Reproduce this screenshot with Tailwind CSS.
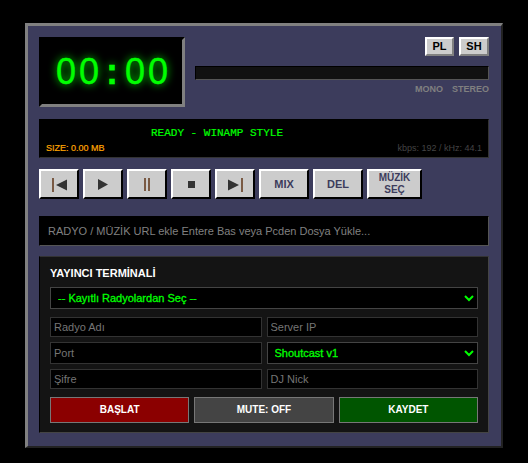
<!DOCTYPE html>
<html lang="en">
<head>
  <meta charset="UTF-8">
  <meta name="viewport" content="width=device-width, initial-scale=1.0">
  <title>Winamp Player</title>
  <script src="https://cdn.jsdelivr.net/npm/@tailwindcss/browser@4"></script>
</head>
<body class="bg-black min-h-screen font-['Liberation_Sans',Arial,sans-serif]">
  <div class="pt-[23px] pl-[25px]">
    <!-- Player -->
    <div class="w-[478px] h-[425px] bg-[#3c3c5c] border-[3px] border-t-[#808080] border-l-[#808080] border-r-[#222222] border-b-[#222222] border-r-2 border-b-2 pt-[11px] pl-[11px] pr-[12px]">
      <!-- Top -->
      <div class="flex h-[70px]">
        <div class="w-[146px] h-[70px] bg-black border-[3px] border-t-black border-l-black border-r-[#808080] border-b-[#808080] flex items-center justify-center text-[#00ff00] text-[36px] leading-none [-webkit-text-stroke:0.4px_#00ff00] [text-shadow:0_0_8px_#00ff00]">
          <span class="w-[23px] text-center">0</span>
          <span class="w-[23px] text-center">0</span>
          <span class="w-[23px] text-center font-bold">:</span>
          <span class="w-[23px] text-center">0</span>
          <span class="w-[23px] text-center">0</span>
        </div>
        <div class="flex-1 ml-[10px] flex flex-col">
          <div class="flex justify-end gap-[5px]">
            <button class="w-[29px] h-[19px] bg-[#cccccc] border-2 border-t-white border-l-white border-r-[#808080] border-b-[#808080] text-[11px] font-bold text-black leading-none">PL</button>
            <button class="w-[30px] h-[19px] bg-[#cccccc] border-2 border-t-white border-l-white border-r-[#808080] border-b-[#808080] text-[11px] font-bold text-black leading-none">SH</button>
          </div>
          <div class="mt-[10px] h-[14px] bg-[#111111] border border-t-black border-l-black border-r-[#555555] border-b-[#555555]"></div>
          <div class="mt-[2px] flex justify-end gap-[9px] text-[9px] font-bold text-[#808080] leading-[14px]">
            <span>MONO</span>
            <span>STEREO</span>
          </div>
        </div>
      </div>

      <!-- Info -->
      <div class="mt-[12px] h-[39px] bg-black border border-t-black border-l-black border-r-[#333333] border-b-[#333333]">
        <div class="pl-[111px] pt-[6px] text-[11px] leading-[14px] text-[#00ff00] [-webkit-text-stroke:0.2px_#00ff00] font-['Liberation_Mono',monospace]">READY - WINAMP STYLE</div>
        <div class="flex justify-between px-[6px] mt-[2px] text-[9px] leading-[12px]">
          <span class="text-[#ffa500] [-webkit-text-stroke:0.2px_#ffa500]">SIZE: 0.00 MB</span>
          <span class="text-[#444444]">kbps: 192 / kHz: 44.1</span>
        </div>
      </div>

      <!-- Transport -->
      <div class="mt-[11px] flex gap-[4px]">
        <button class="w-[40px] h-[30px] bg-[#cccccc] border-2 border-t-white border-l-white border-r-black border-b-black flex items-center justify-center pt-[1px]">
          <svg width="15" height="14" viewBox="0 0 15 14"><rect x="0" y="0" width="2" height="14" fill="#7a5a44"/><path d="M15 1.5V12.5L4 7Z" fill="#333"/></svg>
        </button>
        <button class="w-[40px] h-[30px] bg-[#cccccc] border-2 border-t-white border-l-white border-r-black border-b-black flex items-center justify-center pt-[1px]">
          <svg width="10" height="11" viewBox="0 0 10 11"><path d="M0 0V11L10 5.5Z" fill="#333"/></svg>
        </button>
        <button class="w-[40px] h-[30px] bg-[#cccccc] border-2 border-t-white border-l-white border-r-black border-b-black flex items-center justify-center pt-[1px]">
          <svg width="6" height="13" viewBox="0 0 6 13"><rect x="0" y="0" width="2" height="13" fill="#7a5a44"/><rect x="4" y="0" width="2" height="13" fill="#7a5a44"/></svg>
        </button>
        <button class="w-[40px] h-[30px] bg-[#cccccc] border-2 border-t-white border-l-white border-r-black border-b-black flex items-center justify-center pt-[1px]">
          <svg width="7" height="7" viewBox="0 0 7 7"><rect width="7" height="7" fill="#333"/></svg>
        </button>
        <button class="w-[40px] h-[30px] bg-[#cccccc] border-2 border-t-white border-l-white border-r-black border-b-black flex items-center justify-center pt-[1px]">
          <svg width="15" height="14" viewBox="0 0 15 14"><path d="M0 1.5V12.5L11 7Z" fill="#333"/><rect x="13" y="0" width="2" height="14" fill="#7a5a44"/></svg>
        </button>
        <button class="w-[50px] h-[30px] bg-[#cccccc] border-2 border-t-white border-l-white border-r-black border-b-black text-[11px] font-bold text-[#3c3c5c] leading-none">MIX</button>
        <button class="w-[50px] h-[30px] bg-[#cccccc] border-2 border-t-white border-l-white border-r-black border-b-black text-[11px] font-bold text-[#3c3c5c] leading-none">DEL</button>
        <button class="w-[55px] h-[30px] bg-[#cccccc] border-2 border-t-white border-l-white border-r-black border-b-black text-[10px] font-bold text-[#3c3c5c] leading-[12px]">MÜZİK<br>SEÇ</button>
      </div>

      <!-- URL -->
      <input class="mt-[17px] block w-full h-[30px] bg-black border border-t-black border-l-black border-r-[#555555] border-b-[#555555] px-[8px] text-[11px] text-[#808080] placeholder:text-[#808080] outline-none" placeholder="RADYO / MÜZİK URL ekle Entere Bas veya Pcden Dosya Yükle...">

      <!-- Terminal -->
      <div class="mt-[10px] h-[177px] bg-[#141414] border border-t-[#333333] border-l-black border-r-[#444444] border-b-[#444444] pt-[9px] px-[10px]">
        <div class="text-[11px] font-bold text-white leading-[14px]">YAYINCI TERMİNALİ</div>
        <select class="mt-[7px] block w-full h-[22px] bg-black border border-[#444444] px-[3px] text-[11px] text-[#00ff00] [-webkit-text-stroke:0.3px_#00ff00]">
          <option>-- Kayıtlı Radyolardan Seç --</option>
        </select>
        <div class="mt-[8px] grid grid-cols-2 gap-[5px]">
          <input class="h-[20px] bg-black border border-[#333333] px-[3px] text-[11px] text-[#888888] placeholder:text-[#757575] outline-none w-full" placeholder="Radyo Adı">
          <input class="h-[20px] bg-black border border-[#333333] px-[3px] text-[11px] text-[#888888] placeholder:text-[#757575] outline-none w-full" placeholder="Server IP">
          <input class="h-[22px] bg-black border border-[#333333] px-[3px] text-[11px] text-[#888888] placeholder:text-[#757575] outline-none w-full" placeholder="Port">
          <select class="h-[22px] bg-black border border-[#444444] px-[3px] text-[11px] text-[#00ff00] [-webkit-text-stroke:0.3px_#00ff00] w-full">
            <option>Shoutcast v1</option>
          </select>
          <input class="h-[20px] bg-black border border-[#333333] px-[3px] text-[11px] text-[#888888] placeholder:text-[#757575] outline-none w-full" placeholder="Şifre">
          <input class="h-[20px] bg-black border border-[#333333] px-[3px] text-[11px] text-[#888888] placeholder:text-[#757575] outline-none w-full" placeholder="DJ Nick">
        </div>
        <div class="mt-[8px] grid grid-cols-3 gap-[5px]">
          <button class="h-[26px] bg-[#8b0000] border border-[#777777] text-[10px] font-bold text-white leading-none">BAŞLAT</button>
          <button class="h-[26px] bg-[#444444] border border-[#777777] text-[10px] font-bold text-white leading-none">MUTE: OFF</button>
          <button class="h-[26px] bg-[#005500] border border-[#777777] text-[10px] font-bold text-white leading-none">KAYDET</button>
        </div>
      </div>
    </div>
  </div>
</body>
</html>
